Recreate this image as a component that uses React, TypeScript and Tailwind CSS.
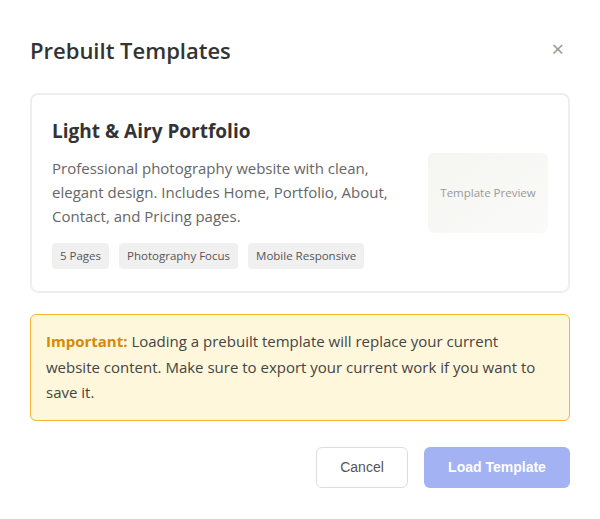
import React from "react";

export default function App() {
  const font = { fontFamily: '"Open Sans", "Noto Sans", sans-serif' };
  return (
    <div className="w-[600px] h-[519px] bg-white px-[30px] pt-[32px]" style={font}>
      <div className="flex items-center justify-between h-[36px]">
        <h2 className="text-[22px] font-semibold text-[#333] leading-[36px]">Prebuilt Templates</h2>
        <button className="text-[#999] text-[22px] leading-none mr-[6px] mt-[-5px]">×</button>
      </div>
      <div className="mt-[25px] border-2 border-[#eeeeee] rounded-[8px] px-[20px] pt-[22px] pb-[22px] flex items-center gap-[20px]">
        <div className="flex-1">
          <h3 className="text-[19px] font-bold text-[#333] leading-[28px]">Light &amp; Airy Portfolio</h3>
          <p className="mt-[11px] text-[15px] leading-[24px] text-[#666]">
            Professional photography website with clean, elegant design. Includes Home, Portfolio, About, Contact, and Pricing pages.
          </p>
          <div className="mt-[15px] flex gap-[10px]">
            {["5 Pages", "Photography Focus", "Mobile Responsive"].map((t) => (
              <span key={t} className="bg-[#f0f0f0] text-[#555] text-[11.5px] h-[26px] leading-[26px] px-[8px] rounded-[4px]">
                {t}
              </span>
            ))}
          </div>
        </div>
        <div className="w-[120px] h-[80px] shrink-0 rounded-[6px] bg-gradient-to-br from-[#f5f5f2] to-[#fafaf8] flex items-center justify-center text-[11.5px] text-[#999]">
          Template Preview
        </div>
      </div>
      <div className="mt-[21px] bg-[#fff7db] border border-[#f5b52e] rounded-[6px] px-[15px] py-[14px] text-[15px] leading-[25.6px] text-[#444]">
        <strong className="text-[#d4890a] font-bold">Important:</strong> Loading a prebuilt template will replace your current website content. Make sure to export your current work if you want to save it.
      </div>
      <div className="mt-[26px] flex justify-end gap-[16px]" style={{ fontFamily: '"Liberation Sans", Arial, sans-serif' }}>
        <button className="w-[92px] h-[41px] border border-[#dddddd] rounded-[6px] bg-white text-[14px] text-[#555]">Cancel</button>
        <button className="w-[146px] h-[41px] rounded-[6px] bg-[#a3b2f2] text-white text-[14px] font-bold">Load Template</button>
      </div>
    </div>
  );
}
